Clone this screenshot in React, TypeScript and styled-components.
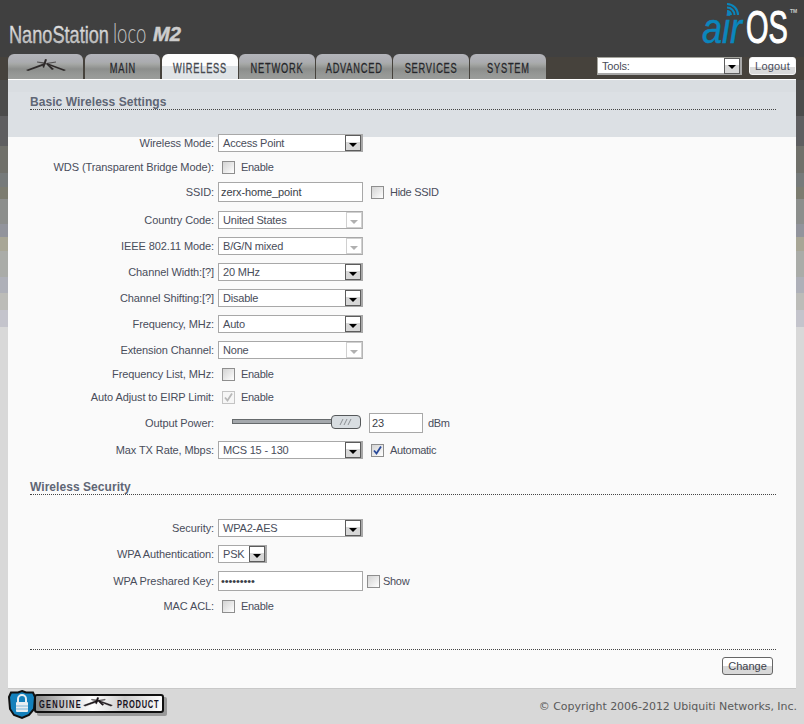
import React from "react";
import styled, { createGlobalStyle } from "styled-components";

const Global = createGlobalStyle`
  html, body { margin: 0; padding: 0; }
  body {
    width: 804px;
    height: 724px;
    overflow: hidden;
    font-family: "Liberation Sans", Arial, sans-serif;
    font-size: 11px;
    background: linear-gradient(to bottom,
      #404040 0 57px, #46423c 57px 80px, #4b4b4b 80px 116px, #5e5e60 116px 146px,
      #70706a 146px 173px, #767a7a 173px 187px, #7c7c70 187px 199px, #8c8e8c 199px 224px,
      #92949c 224px 237px, #a8a696 237px 251px, #aaaca8 251px 277px, #aeb0b8 277px 293px,
      #bcbcb8 293px 310px, #c4c4cc 310px 327px, #d8d8d8 327px 724px);
  }
`;

const Page = styled.div`
  width: 804px;
  height: 724px;
  display: flex;
  flex-direction: column;
`;

const Header = styled.header`
  height: 54px;
  display: flex;
  justify-content: space-between;
  align-items: flex-start;
`;

const ProductLogo = styled.svg`
  width: 190px;
  height: 54px;
  display: block;
`;

const AirLogo = styled.svg`
  width: 110px;
  height: 54px;
  display: block;
`;

const NavBar = styled.div`
  height: 25px;
  padding: 0 8px;
  display: flex;
  justify-content: space-between;
`;

const Tabs = styled.nav`
  display: flex;
  align-items: stretch;
`;

const Tab = styled.div<{ $active?: boolean; $gap?: number; $width?: number }>`
  width: ${(p) => p.$width ?? 76}px;
  margin-right: ${(p) => p.$gap ?? 1}px;
  border-radius: 6px 6px 0 0;
  display: flex;
  align-items: center;
  justify-content: center;
  padding-top: 2px;
  box-sizing: border-box;
  color: ${(p) => (p.$active ? "#45484e" : "#25262a")};
  text-shadow: ${(p) => (p.$active ? "none" : "0 1px 0 rgba(255,255,255,.18)")};
  background: ${(p) =>
    p.$active
      ? "linear-gradient(to bottom, #fdfdfd 0 12px, #dfe3e6 12px 25px)"
      : "linear-gradient(to bottom, #b3b4ba 0, #abacb0 8px, #a6a8a6 10px, #8c8e8c 15px, #959795 20px, #9b9d9b 25px)"};
`;

const TabLabel = styled.span`
  display: inline-block;
  white-space: nowrap;
  font-size: 14px;
  letter-spacing: 1.2px;
  -webkit-text-stroke: 0.3px currentColor;
  transform: scaleX(0.66);
`;

const TabIcon = styled.svg`
  width: 42px;
  height: 14px;
  display: block;
  margin-bottom: 3px;
`;

const ToolsArea = styled.div`
  display: flex;
  align-items: flex-start;
  padding-top: 3px;
  gap: 7px;
`;

const SelectBox = styled.div<{ $width?: number; $disabled?: boolean; $heavy?: boolean }>`
  width: ${(p) => p.$width ?? 145}px;
  height: 18px;
  box-sizing: border-box;
  border: 1px solid ${(p) => (p.$heavy ? "#a4a49c" : "#a8a8a8")};
  border-right: ${(p) => (p.$disabled ? "1px solid #b4b4b4" : "2px solid #a8a8a8")};
  border-bottom: ${(p) => (p.$heavy ? "2px" : "1px")} solid #a8a8a8;
  background: #fff;
  display: flex;
  align-items: center;
  justify-content: space-between;
  font-size: 11px;
  color: #494d5a;
  letter-spacing: -0.2px;
`;

const SelectText = styled.span`
  padding-left: 4px;
`;

const ArrowButton = styled.span<{ $disabled?: boolean }>`
  width: 16px;
  height: 16px;
  flex: none;
  box-sizing: border-box;
  border: 1px solid ${(p) => (p.$disabled ? "#d0d0d0" : "#5c5c5c")};
  background: ${(p) =>
    p.$disabled
      ? "#fff"
      : "linear-gradient(to bottom, #ffffff 0 6px, #d8d8d8 6px 14px)"};
  display: flex;
  align-items: center;
  justify-content: center;
  &::after {
    content: "";
    display: block;
    margin-top: 3px;
    border-left: 4px solid transparent;
    border-right: 4px solid transparent;
    border-top: 4px solid ${(p) => (p.$disabled ? "#b0b0b0" : "#000")};
  }
`;

const LogoutButton = styled.div`
  width: 47px;
  height: 18px;
  box-sizing: border-box;
  border: 1px solid #f4f4f4;
  border-radius: 3px;
  background: linear-gradient(to bottom, #ffffff 0 9px, #dadada 9px 16px);
  display: flex;
  align-items: center;
  justify-content: center;
  color: #4a4e5c;
  font-size: 11px;
  letter-spacing: 0.2px;
`;

const Card = styled.main`
  margin: 0 8px;
  height: 610px;
  box-sizing: border-box;
  padding: 0 20px 0 22px;
  border-top: 1px solid #fff;
  border-bottom: 1px solid #c8c8c8;
  background: linear-gradient(to bottom, #d9dde1 0 12px, #dce0e4 12px 57px, #fafafa 57px);
  display: flex;
  flex-direction: column;
`;

const SectionTitle = styled.h2<{ $top: number }>`
  margin: ${(p) => p.$top}px 0 0;
  height: 14px;
  border-bottom: 1px dotted #444;
  font-size: 12px;
  line-height: 14px;
  font-weight: bold;
  color: #5f6675;
  letter-spacing: 0.05px;
`;

const Row = styled.div<{ $gap: number }>`
  margin: ${(p) => p.$gap}px 0 0 -22px;
  height: 18px;
  display: flex;
  align-items: center;
`;

const Label = styled.label`
  width: 206px;
  margin-right: 4px;
  flex: none;
  text-align: right;
  color: #494d5a;
  white-space: nowrap;
  letter-spacing: -0.1px;
`;

const TextField = styled.div<{ $width: number; $ml?: number }>`
  width: ${(p) => p.$width}px;
  height: 20px;
  margin-left: ${(p) => p.$ml ?? 0}px;
  flex: none;
  box-sizing: border-box;
  border: 1px solid #a8a8a8;
  background: #fff;
  padding: 0 2px;
  display: flex;
  align-items: center;
  font-size: 11px;
  letter-spacing: -0.1px;
  color: #3a3e48;
`;

const Check = styled.span<{ $ml: number; $faded?: boolean }>`
  width: 13px;
  height: 13px;
  margin-left: ${(p) => p.$ml}px;
  flex: none;
  box-sizing: border-box;
  border: 1px solid ${(p) => (p.$faded ? "#c4c4c4" : "#8e8e8e")};
  background: ${(p) =>
    p.$faded ? "#f6f6f6" : "linear-gradient(135deg, #d4d4d4 0, #e6e6e6 45%, #ffffff 100%)"};
  display: flex;
  align-items: center;
  justify-content: center;
`;

const CheckMark = styled.svg`
  width: 11px;
  height: 11px;
  display: block;
`;

const OptionText = styled.span<{ $ml: number }>`
  margin-left: ${(p) => p.$ml}px;
  color: #494d5a;
  white-space: nowrap;
  letter-spacing: -0.3px;
`;

const Help = styled.span`
  color: #494d5a;
`;

const SliderWrap = styled.div`
  width: 129px;
  margin: 0 0 3px 14px;
  flex: none;
  height: 14px;
  position: relative;
  display: flex;
  align-items: center;
`;

const SliderTrack = styled.div`
  width: 100px;
  height: 5px;
  box-sizing: border-box;
  background: #a4a8ac;
  border: 1px solid #666a6c;
`;

const SliderHandle = styled.div`
  position: absolute;
  left: 99px;
  top: 0;
  width: 30px;
  height: 14px;
  box-sizing: border-box;
  border: 1px solid #55585a;
  border-radius: 4px;
  background: #d8dde1;
  display: flex;
  align-items: center;
  justify-content: center;
`;

const Grip = styled.svg`
  width: 14px;
  height: 6px;
  display: block;
`;

const ButtonBar = styled.div`
  display: flex;
  justify-content: flex-end;
  margin-top: 7px;
  padding-right: 3px;
`;

const ChangeButton = styled.div`
  width: 51px;
  height: 18px;
  box-sizing: border-box;
  border: 1px solid #666;
  border-radius: 3px;
  background: linear-gradient(to bottom, #ffffff 0 8px, #d8d8d8 8px 16px);
  display: flex;
  align-items: center;
  justify-content: center;
  color: #3e424c;
  font-size: 11px;
`;

const Rule = styled.div`
  margin-top: 34px;
  border-top: 1px dotted #444;
`;

const Footer = styled.footer`
  flex: 1;
  display: flex;
  align-items: flex-start;
  justify-content: space-between;
  padding: 0 7px 0 8px;
`;

const Badge = styled.svg`
  width: 162px;
  height: 33px;
  display: block;
`;

const Copyright = styled.span`
  margin-top: 11px;
  font-family: "DejaVu Sans", Verdana, sans-serif;
  font-size: 11px;
  color: #5a5a5a;
  letter-spacing: -0.03px;
`;

const Dish = ({ stroke = "#2e2a2a", weight = 0 }: { stroke?: string; weight?: number }) => (
  <g stroke={stroke} strokeWidth={weight}>
    <path d="M1 11 L17 5 L21 4 L20 6 L3 12 Z" fill={stroke} />
    <path d="M41 11 L26 5.5 L22 4 L23 6 L39 12 Z" fill={stroke} />
    <path d="M20 0 L22 0.5 L19 9 L17.5 8 Z" fill={stroke} />
    <path d="M22 4 L29 10 L27 11 L21 5 Z" fill={stroke} />
    <path d="M20 5 L12 3.5 L12 2.5 L21 3.5 Z" fill={stroke} opacity=".7" />
    <path d="M21 4 L31 2.5 L31 3.5 L22 5 Z" fill={stroke} opacity=".7" />
  </g>
);

const Select = ({ value, width, disabled }: { value: string; width?: number; disabled?: boolean }) => (
  <SelectBox $width={width} $disabled={disabled}>
    <SelectText>{value}</SelectText>
    <ArrowButton $disabled={disabled} />
  </SelectBox>
);

const Tick = ({ color }: { color: string }) => (
  <CheckMark viewBox="0 0 11 11">
    <path d="M2 5.5 L4.5 8.5 L9 1.5" fill="none" stroke={color} strokeWidth="1.8" />
  </CheckMark>
);

export default function App() {
  return (
    <Page>
      <Global />
      <Header>
        <ProductLogo viewBox="0 0 190 54">
          <defs>
            <linearGradient id="nano" x1="0" y1="0" x2="0" y2="1">
              <stop offset="0" stopColor="#f0f0f0" />
              <stop offset="1" stopColor="#a8a8a8" />
            </linearGradient>
          </defs>
          <text transform="translate(9 43) scale(.79 1)" fontFamily="Liberation Sans, sans-serif" fontSize="23" fill="url(#nano)" stroke="#d8d8d8" strokeWidth=".35">NanoStation</text>
          <text transform="translate(113 43) scale(.66 1)" fontFamily="Lato, sans-serif" fontWeight="300" fontSize="28" fill="#c4c4c4">loco</text>
          <text transform="translate(153 41) scale(.96 1)" fontFamily="Liberation Sans, sans-serif" fontWeight="bold" fontStyle="italic" fontSize="21" fill="#cdcdcd" stroke="#cdcdcd" strokeWidth=".5">M2</text>
        </ProductLogo>
        <AirLogo viewBox="0 0 110 54">
          <text transform="translate(8 43) scale(.86 1)" fontFamily="Liberation Sans, sans-serif" fontStyle="italic" fontSize="42" fill="#0a86bd" stroke="#0a86bd" strokeWidth=".5">air</text>
          <text transform="translate(52 43) scale(.63 1)" fontFamily="Liberation Sans, sans-serif" fontSize="46" fill="#ffffff" stroke="#ffffff" strokeWidth="1">OS</text>
          <text x="96" y="13" fontFamily="Liberation Sans, sans-serif" fontWeight="bold" fontSize="5" fill="#cccccc">TM</text>
          <g fill="none" stroke="#0a86bd" strokeWidth="2">
            <path d="M33 11 A 4 4 0 0 1 37 15" />
            <path d="M33 7.5 A 7.5 7.5 0 0 1 40.5 15" />
            <path d="M33 4 A 11 11 0 0 1 44 15" />
          </g>
        </AirLogo>
      </Header>

      <NavBar>
        <Tabs>
          <Tab $gap={2} $width={75}>
            <TabIcon viewBox="0 0 42 14"><Dish /></TabIcon>
          </Tab>
          <Tab $gap={2} $width={75}><TabLabel>MAIN</TabLabel></Tab>
          <Tab $active><TabLabel>WIRELESS</TabLabel></Tab>
          <Tab><TabLabel>NETWORK</TabLabel></Tab>
          <Tab><TabLabel>ADVANCED</TabLabel></Tab>
          <Tab><TabLabel>SERVICES</TabLabel></Tab>
          <Tab><TabLabel>SYSTEM</TabLabel></Tab>
        </Tabs>
        <ToolsArea>
          <SelectBox $heavy>
            <SelectText>Tools:</SelectText>
            <ArrowButton />
          </SelectBox>
          <LogoutButton>Logout</LogoutButton>
        </ToolsArea>
      </NavBar>

      <Card>
        <SectionTitle $top={15}>Basic Wireless Settings</SectionTitle>
        <Row $gap={24}><Label>Wireless Mode:</Label><Select value="Access Point" /></Row>
        <Row $gap={6}>
          <Label>WDS (Transparent Bridge Mode):</Label>
          <Check $ml={4} />
          <OptionText $ml={6}>Enable</OptionText>
        </Row>
        <Row $gap={7}>
          <Label>SSID:</Label>
          <TextField $width={145}>zerx-home_point</TextField>
          <Check $ml={8} />
          <OptionText $ml={6}>Hide SSID</OptionText>
        </Row>
        <Row $gap={10}><Label>Country Code:</Label><Select value="United States" disabled /></Row>
        <Row $gap={8}><Label>IEEE 802.11 Mode:</Label><Select value="B/G/N mixed" disabled /></Row>
        <Row $gap={8}><Label>Channel Width:<Help>[?]</Help></Label><Select value="20 MHz" /></Row>
        <Row $gap={8}><Label>Channel Shifting:<Help>[?]</Help></Label><Select value="Disable" /></Row>
        <Row $gap={8}><Label>Frequency, MHz:</Label><Select value="Auto" /></Row>
        <Row $gap={8}><Label>Extension Channel:</Label><Select value="None" disabled /></Row>
        <Row $gap={6}>
          <Label>Frequency List, MHz:</Label>
          <Check $ml={4} />
          <OptionText $ml={6}>Enable</OptionText>
        </Row>
        <Row $gap={5}>
          <Label>Auto Adjust to EIRP Limit:</Label>
          <Check $ml={4} $faded><Tick color="#b8b8b8" /></Check>
          <OptionText $ml={6}>Enable</OptionText>
        </Row>
        <Row $gap={8}>
          <Label>Output Power:</Label>
          <SliderWrap>
            <SliderTrack />
            <SliderHandle>
              <Grip viewBox="0 0 14 6">
                <path d="M1 6 L4 0 M5 6 L8 0 M9 6 L12 0" stroke="#8a8e92" strokeWidth="1" fill="none" />
              </Grip>
            </SliderHandle>
          </SliderWrap>
          <TextField $width={54} $ml={8}>23</TextField>
          <OptionText $ml={5}>dBm</OptionText>
        </Row>
        <Row $gap={9}>
          <Label>Max TX Rate, Mbps:</Label>
          <Select value="MCS 15 - 130" />
          <Check $ml={8}><Tick color="#2a4a9a" /></Check>
          <OptionText $ml={6}>Automatic</OptionText>
        </Row>

        <SectionTitle $top={21}>Wireless Security</SectionTitle>
        <Row $gap={24}><Label>Security:</Label><Select value="WPA2-AES" /></Row>
        <Row $gap={8}><Label>WPA Authentication:</Label><Select value="PSK" width={49} /></Row>
        <Row $gap={9}>
          <Label>WPA Preshared Key:</Label>
          <TextField $width={145}>•••••••••</TextField>
          <Check $ml={4} />
          <OptionText $ml={3}>Show</OptionText>
        </Row>
        <Row $gap={7}>
          <Label>MAC ACL:</Label>
          <Check $ml={4} />
          <OptionText $ml={6}>Enable</OptionText>
        </Row>

        <Rule />
        <ButtonBar><ChangeButton>Change</ChangeButton></ButtonBar>
      </Card>

      <Footer>
        <Badge viewBox="0 0 162 33">
          <defs>
            <linearGradient id="metal" x1="0" y1="0" x2="1" y2="0">
              <stop offset="0" stopColor="#888888" />
              <stop offset="0.3" stopColor="#dddddd" />
              <stop offset="0.45" stopColor="#ffffff" />
              <stop offset="0.7" stopColor="#cccccc" />
              <stop offset="0.9" stopColor="#eeeeee" />
              <stop offset="1" stopColor="#ffffff" />
            </linearGradient>
          </defs>
          <rect x="29" y="8" width="130" height="19" rx="2" fill="#9a9a9a" />
          <rect x="27" y="6" width="128" height="17" rx="2" fill="url(#metal)" stroke="#111" strokeWidth="2" />
          <path d="M14 2 L18 3.5 L25 3.5 L27 8 L26 20 L21 26 L14 29 L6 26 L2 20 L1 8 L3 3.5 L10 3.5 Z" fill="#1480bb" stroke="#111" strokeWidth="2" />
          <rect x="8" y="13" width="12" height="10" rx="1" fill="#e8eef2" />
          <path d="M10 13 V10 A4 4 0 0 1 18 10 V13" fill="none" stroke="#e8eef2" strokeWidth="2" />
          <path d="M8 17 H20 M8 20 H20" stroke="#7fb6d8" strokeWidth="1" />
          <text transform="translate(31 18.5) scale(.75 1)" fontFamily="Liberation Sans, sans-serif" fontWeight="bold" fontSize="10" letterSpacing="1.7" fill="#15101c">GENUINE</text>
          <svg x="75" y="8" width="30" height="11" viewBox="0 0 42 14"><Dish stroke="#1a1518" weight={0.7} /></svg>
          <text transform="translate(109 18.5) scale(.75 1)" fontFamily="Liberation Sans, sans-serif" fontWeight="bold" fontSize="10" letterSpacing="1" fill="#15101c">PRODUCT</text>
        </Badge>
        <Copyright>© Copyright 2006-2012 Ubiquiti Networks, Inc.</Copyright>
      </Footer>
    </Page>
  );
}
